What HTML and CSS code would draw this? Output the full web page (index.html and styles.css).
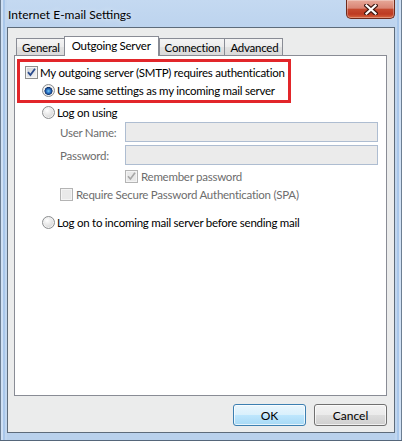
FILE: index.html
```html
<!DOCTYPE html>
<html>
<head>
<meta charset="utf-8">
<title>Internet E-mail Settings</title>
<link rel="stylesheet" href="styles.css">
</head>
<body>
<div class="window">
  <div class="titlebar">
    <span class="title">Internet E-mail Settings</span>
    <button class="close" aria-label="Close">
      <svg width="14" height="11" viewBox="0 0 14 11">
        <path d="M2.5 1.5 L11.5 9.5 M11.5 1.5 L2.5 9.5" stroke="#3d1710" stroke-width="4.4" stroke-linecap="square" fill="none"/>
        <path d="M2.5 1.5 L11.5 9.5 M11.5 1.5 L2.5 9.5" stroke="#ffffff" stroke-width="2.2" stroke-linecap="square" fill="none"/>
      </svg>
    </button>
  </div>
  <div class="client">
    <div class="tabs">
      <div class="tab">General</div>
      <div class="tab active">Outgoing Server</div>
      <div class="tab">Connection</div>
      <div class="tab">Advanced</div>
    </div>
    <div class="panel">
      <div class="authbox">
        <div class="row row-auth">
          <span class="check checked"><svg width="11" height="11" viewBox="0 0 11 11"><path d="M2 5.2 L4.4 8 L9 1.8" fill="none" stroke="#2a4b8d" stroke-width="1.8"/></svg></span>
          <span>My outgoing server (SMTP) requires authentication</span>
        </div>
        <div class="row row-sub">
          <span class="radio selected"></span>
          <span>Use same settings as my incoming mail server</span>
        </div>
      </div>
      <div class="row row-radio">
        <span class="radio"></span>
        <span>Log on using</span>
      </div>
      <div class="field field-user">
        <span class="flabel">User Name:</span>
        <span class="input"></span>
      </div>
      <div class="field field-pass">
        <span class="flabel">Password:</span>
        <span class="input"></span>
      </div>
      <div class="row row-remember disabled">
        <span class="check checked off"><svg width="11" height="11" viewBox="0 0 11 11"><path d="M2 5.2 L4.4 8 L9 1.8" fill="none" stroke="#a6a6a6" stroke-width="1.6"/></svg></span>
        <span>Remember password</span>
      </div>
      <div class="row row-spa disabled">
        <span class="check off"></span>
        <span>Require Secure Password Authentication (SPA)</span>
      </div>
      <div class="row row-radio row-last">
        <span class="radio"></span>
        <span>Log on to incoming mail server before sending mail</span>
      </div>
    </div>
    <div class="buttons">
      <button class="btn default">OK</button>
      <button class="btn">Cancel</button>
    </div>
  </div>
</div>
</body>
</html>
```

FILE: styles.css
```css
* { box-sizing: border-box; }
html, body { margin: 0; padding: 0; }
body {
  width: 402px;
  height: 441px;
  overflow: hidden;
  font-family: Lato, "Noto Sans", sans-serif;
  font-size: 11.5px;
  letter-spacing: -0.25px;
  color: #000;
  background: #fff;
}

.window {
  width: 402px;
  height: 441px;
  display: flex;
  flex-direction: column;
  padding: 0 7px 8px 7px;
  background:
    linear-gradient(90deg, #6c7e92 0 1px, #cfe0f4 1px 3px, #a9c7ea 3px 5px, #c0d6ef 5px 7px) left top / 7px 100% no-repeat,
    linear-gradient(270deg, #6c7e92 0 1px, #cfe0f4 1px 3px, #a9c7ea 3px 5px, #c0d6ef 5px 7px) right top / 7px 100% no-repeat,
    linear-gradient(#c4d9f1, #bcd3ee 30px, #b9d1ec);
  box-shadow: inset 0 -1px 0 #55667a;
}

.titlebar {
  height: 27px;
  flex: none;
  display: flex;
  align-items: flex-start;
  padding-left: 1px;
}
.title {
  margin-top: 7px;
  font-size: 12px;
  letter-spacing: 0;
  color: #000;
  text-shadow: 0 0 6px rgba(255,255,255,0.7);
}
.close {
  margin-left: auto;
  width: 49px;
  height: 19px;
  padding: 0;
  border: 1px solid #6e2a1c;
  border-top: none;
  border-radius: 0 0 5px 5px;
  background: linear-gradient(180deg, #e7a899 0%, #d98574 45%, #c4492f 52%, #bd3a22 78%, #d8663f 100%);
  box-shadow: inset 0 0 0 1px rgba(255,255,255,0.3);
  display: flex;
  align-items: center;
  justify-content: center;
}

.client {
  flex: 1;
  display: flex;
  flex-direction: column;
  border: 1px solid #5d6b7a;
  background: #ebecec;
  padding: 0 7px 6px 6px;
}

.tabs {
  height: 28px;
  margin-bottom: -1px;
  padding-left: 2px;
  display: flex;
  align-items: flex-end;
  position: relative;
  z-index: 1;
}
.tab {
  height: 17px;
  margin-bottom: 1px;
  padding: 2px 4px 0 5px;
  border: 1px solid #898c95;
  border-bottom: none;
  background: linear-gradient(#f4f4f4, #ececec 50%, #e2e2e2 51%, #dadada);
  line-height: 14px;
  white-space: nowrap;
}
.tab + .tab { margin-left: -1px; }
.tab.active + .tab { margin-left: 0; }
.tab.active {
  height: 20px;
  margin-bottom: 0;
  padding: 0 7px;
  background: #fff;
  line-height: 17px;
}

.panel {
  flex: 1;
  border: 1px solid #898c95;
  background: #fff;
  padding: 3px 0 0 0;
}

.authbox {
  width: 274px;
  height: 44px;
  margin-left: 2px;
  border: 3px solid #e2262a;
  padding: 1px 0;
}

.row {
  height: 18px;
  display: flex;
  align-items: center;
  gap: 2px;
  white-space: nowrap;
}
.row-auth { padding-left: 5px; }
.row-sub { padding-left: 22px; }
.row-radio { padding-left: 27px; }
.row-remember { margin-top: 2px; padding-left: 110px; gap: 3px; }
.row-spa { padding-left: 45px; gap: 3px; }
.row-last { margin-top: 10px; }
.disabled { color: #6d6d6d; }

.check {
  width: 13px;
  height: 13px;
  flex: none;
  border: 1px solid #8e8f8f;
  box-shadow: inset 0 0 0 1px #f4f4f4;
  background: linear-gradient(135deg, #cdd0d5, #f6f6f6);
  display: flex;
  align-items: center;
  justify-content: center;
}
.check.off {
  border-color: #b4b4b4;
  background: #e9e9e9;
}

.radio {
  width: 13px;
  height: 13px;
  flex: none;
  border-radius: 50%;
  border: 1px solid #8c8e90;
  box-shadow: inset 0 0 0 1px #f2f2f2;
  background: radial-gradient(circle at 38% 32%, #ffffff 0, #e6e6e6 45%, #c9c9c9 100%);
}
.radio.selected {
  background:
    radial-gradient(circle at 50% 55%, #7fd0f7 0, #3a8ad6 1.5px, #1b4f9a 3px, #0e2c5e 3.8px, rgba(14,44,94,0) 4.3px),
    radial-gradient(circle at 38% 32%, #ffffff 0, #e6e6e6 45%, #c9c9c9 100%);
}

.field {
  height: 20px;
  display: flex;
  align-items: center;
  padding-left: 45px;
  margin-right: 8px;
  color: #6d6d6d;
}
.field-user { margin-top: 1px; }
.field-pass { margin-top: 3px; }
.flabel { width: 65px; flex: none; }
.input {
  flex: 1;
  height: 20px;
  border: 1px solid #aebdd1;
  background: #ebebeb;
}

.buttons {
  flex: none;
  margin-top: 8px;
  display: flex;
  justify-content: flex-end;
  gap: 8px;
}
.btn {
  width: 73px;
  height: 22px;
  padding: 0;
  font-family: inherit;
  font-size: 12px;
  letter-spacing: 0;
  color: #000;
  border: 1px solid #707070;
  border-radius: 3px;
  background: linear-gradient(#f2f2f2, #ebebeb 50%, #dddddd 51%, #cfcfcf);
  box-shadow: inset 0 0 0 1px rgba(255,255,255,0.7);
}
.btn.default {
  border-color: #3c7fb1;
  background: linear-gradient(#eaf6fd, #d9f0fc 50%, #bee6fd 51%, #a7d9f5);
}
```
